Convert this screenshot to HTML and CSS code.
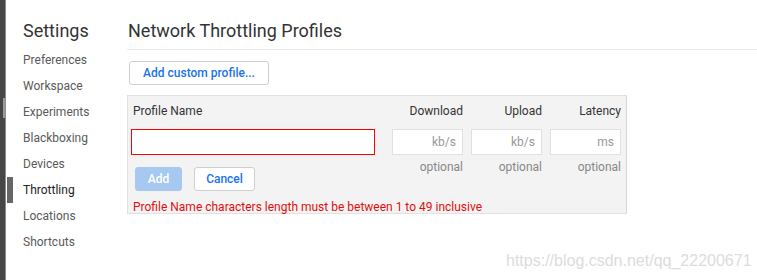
FILE: index.html
```html
<!DOCTYPE html>
<html lang="en">
<head>
    <meta charset="UTF-8">
    <title>Settings - Throttling</title>
    <link rel="stylesheet" href="styles.css">
</head>
<body>

<div class="frame">
    <!-- Dock edge / scrollbar -->
    <div class="edge">
        <div class="edge-thumb"></div>
    </div>

    <!-- Settings sidebar -->
    <div class="sidebar">
        <div class="sidebar-title">Settings</div>
        <div class="tab">Preferences</div>
        <div class="tab">Workspace</div>
        <div class="tab">Experiments</div>
        <div class="tab">Blackboxing</div>
        <div class="tab">Devices</div>
        <div class="tab selected">Throttling</div>
        <div class="tab">Locations</div>
        <div class="tab">Shortcuts</div>
    </div>

    <!-- Throttling panel -->
    <div class="content">
        <div class="header">Network Throttling Profiles</div>
        <div class="body">
            <button class="btn btn-wide">Add custom profile...</button>

            <div class="editor">
                <div class="row labels">
                    <div class="col-name">Profile Name</div>
                    <div class="col-num">Download</div>
                    <div class="col-num">Upload</div>
                    <div class="col-num">Latency</div>
                </div>
                <div class="row inputs">
                    <div class="col-name"><input class="field field-error" type="text"></div>
                    <div class="col-num"><input class="field" type="text" placeholder="kb/s"></div>
                    <div class="col-num"><input class="field" type="text" placeholder="kb/s"></div>
                    <div class="col-num"><input class="field" type="text" placeholder="ms"></div>
                </div>
                <div class="row hints">
                    <div class="col-name actions">
                        <button class="btn btn-primary" disabled>Add</button>
                        <button class="btn btn-cancel">Cancel</button>
                    </div>
                    <div class="col-num hint">optional</div>
                    <div class="col-num hint">optional</div>
                    <div class="col-num hint">optional</div>
                </div>
                <div class="error">Profile Name characters length must be between 1 to 49 inclusive</div>
            </div>
        </div>
    </div>
</div>

<div class="watermark">https://blog.csdn.net/qq_22200671</div>

</body>
</html>
```

FILE: styles.css
```css
body {
    margin: 0;
    font-family: Roboto, "Open Sans", sans-serif;
    background-color: white;
    color: #333;
}

.frame {
    display: flex;
    height: 280px;
}

/* Left dock edge */
.edge {
    width: 5px;
    background-color: #464646;
    border-right: 1px solid #8c8c8c;
    padding-top: 98px;
}

.edge-thumb {
    margin-left: 3px;
    width: 2px;
    height: 20px;
    background-color: #9a9a9a;
}

/* Sidebar */
.sidebar {
    width: 104px;
    padding-left: 17px;
    padding-top: 20px;
}

.sidebar-title {
    font-size: 18px;
    color: #333;
    height: 27px;
}

.tab {
    position: relative;
    font-size: 12px;
    color: #5a5a5a;
    height: 26px;
    line-height: 26px;
}

.tab.selected {
    color: #222;
}

.tab.selected::before {
    content: "";
    position: absolute;
    left: -16px;
    top: 0;
    width: 6px;
    height: 26px;
    background-color: #666;
}

/* Content */
.content {
    flex: 1;
    padding-top: 20px;
}

.header {
    font-size: 18px;
    color: #333;
    padding-left: 1px;
    height: 29px;
    border-bottom: 1px solid #e8e8e8;
}

.body {
    padding-top: 11px;
}

.btn {
    font-family: inherit;
    font-size: 12px;
    font-weight: 500;
    color: #1a73e8;
    background-color: white;
    border: 1px solid #cfcfcf;
    border-radius: 3px;
    height: 24px;
    padding: 0;
    white-space: nowrap;
}

.btn-wide {
    margin-left: 2px;
    width: 140px;
}

.btn-primary {
    background-color: #a6c8f1;
    border-color: #a6c8f1;
    color: white;
    width: 47px;
}

.btn-cancel {
    width: 61px;
}

/* Editor box */
.editor {
    margin-top: 10px;
    width: 498px;
    height: 117px;
    background-color: #f3f3f3;
    border: 1px solid #e2e2e2;
    border-right-color: #d8d8d8;
}

.row {
    display: flex;
    padding-left: 3px;
}

.col-name {
    box-sizing: border-box;
    width: 253px;
}

.col-num {
    width: 71px;
    margin-left: 8px;
    text-align: right;
}

.labels {
    font-size: 12px;
    color: #333;
    height: 33px;
    line-height: 31px;
}

.labels .col-name {
    padding-left: 2px;
}

.field {
    box-sizing: border-box;
    width: 100%;
    height: 26px;
    border: 1px solid #e0e0e0;
    background-color: white;
    font-family: inherit;
    font-size: 12px;
    text-align: right;
    padding: 0 6px;
    outline: none;
}

.field::placeholder {
    color: #999;
}

.col-name .field {
    width: 244px;
    text-align: left;
}

.field-error {
    border-color: #f00;
}

.hints {
    margin-top: 4px;
}

.hint {
    font-size: 12px;
    color: #888;
    line-height: 16px;
}

.actions {
    display: flex;
    gap: 12px;
    padding-left: 4px;
    padding-top: 8px;
}

.error {
    font-size: 12px;
    color: #e30e0e;
    line-height: 16px;
    padding-left: 5px;
    margin-top: 8px;
}

.watermark {
    position: absolute;
    left: 506px;
    top: 252px;
    font-family: "Liberation Sans", Arial, sans-serif;
    font-size: 16px;
    color: #dcdcdc;
}
```
